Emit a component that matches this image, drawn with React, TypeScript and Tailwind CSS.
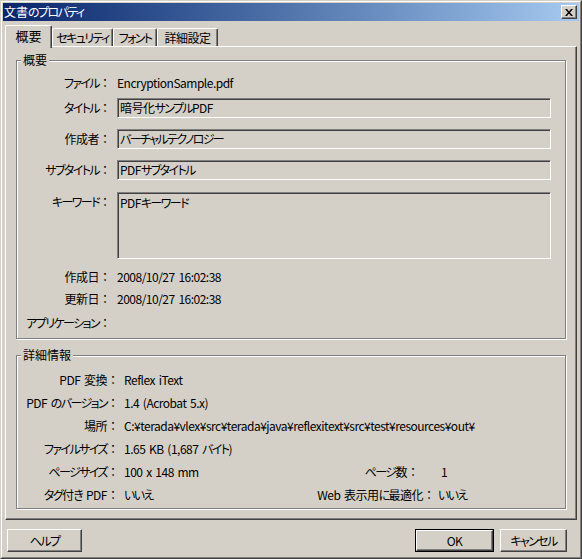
import React from "react";

const palt = "[font-feature-settings:'palt']";

// kana runs come out wider than the reference's UI font, so tighten them
function Jp({ text }: { text: string }) {
  const parts = text.split(/([\u3040-\u30ff]+)/);
  return (
    <>
      {parts.map((p, i) =>
        /[\u3040-\u30ff]/.test(p) ? (
          <span key={i} className={`tracking-[-1.6px] ${palt}`}>
            {p}
          </span>
        ) : (
          p
        ),
      )}
    </>
  );
}

function Label({ text, className }: { text: string; className: string }) {
  return (
    <div className={`${className} shrink-0 whitespace-nowrap text-right`}>
      <Jp text={text} />
      <span className="tracking-normal">：</span>
    </div>
  );
}

function Field({ value, className }: { value: string; className: string }) {
  return (
    <div
      className={`${className} ml-[6px] w-[434px] shrink-0 whitespace-nowrap border border-t-[#808080] border-l-[#808080] border-r-white border-b-white px-[2px] shadow-[inset_1px_1px_0_#404040]`}
    >
      <Jp text={value} />
    </div>
  );
}

function GroupBox({ title, className, children }: { title: string; className: string; children: React.ReactNode }) {
  return (
    <div
      className={`${className} relative border border-[#808080] shadow-[inset_1px_1px_0_#fff,1px_1px_0_#fff]`}
    >
      <span className="absolute left-[4px] top-[-9px] bg-[#d4d0c8] px-[2px] leading-[16px] tracking-normal">{title}</span>
      {children}
    </div>
  );
}

function Button({ label, className, isDefault }: { label: string; className: string; isDefault?: boolean }) {
  return (
    <div className={`${className} h-[23px] shrink-0 ${isDefault ? "border border-black" : ""}`}>
      <div className="flex h-full w-full items-center justify-center border border-t-white border-l-white border-r-[#404040] border-b-[#404040] shadow-[inset_-1px_-1px_0_#808080]">
        <Jp text={label} />
      </div>
    </div>
  );
}

const summary = [
  { label: "作成日", value: "2008/10/27 16:02:38", mt: "mt-[8px]" },
  { label: "更新日", value: "2008/10/27 16:02:38", mt: "mt-[2px]" },
  { label: "アプリケーション", value: "", mt: "mt-[4px]" },
];

const details = [
  { label: "PDF 変換", value: "Reflex iText" },
  { label: "PDF のバージョン", value: "1.4 (Acrobat 5.x)" },
  { label: "場所", value: "C:¥terada¥vlex¥src¥terada¥java¥reflexitext¥src¥test¥resources¥out¥" },
  { label: "ファイルサイズ", value: "1.65 KB (1,687 バイト)" },
];

const tabs = [
  { t: "セキュリティ", w: "w-[61px]" },
  { t: "フォント", w: "w-[44px]" },
  { t: "詳細設定", w: "w-[61px]" },
];

export default function App() {
  return (
    <div className="h-[559px] w-[582px] overflow-hidden border border-t-[#d4d0c8] border-l-[#d4d0c8] border-r-[#404040] border-b-[#404040] bg-[#d4d0c8] font-['Noto_Sans_CJK_JP',sans-serif] text-[12px] leading-[16px] tracking-[-0.5px] [word-spacing:1.5px] text-black">
      <div className="flex h-full flex-col border border-t-white border-l-white border-r-[#808080] border-b-[#808080] p-[1px]">
        {/* title bar */}
        <div className="flex h-[18px] shrink-0 items-center justify-between bg-gradient-to-r from-[#0a246a] to-[#a6caf0] pl-[1px] pr-[2px]">
          <span className="text-[12px] tracking-normal text-white">
            <Jp text="文書のプロパティ" />
          </span>
          <div className="flex h-[14px] w-[16px] items-center justify-center border border-t-white border-l-white border-r-[#404040] border-b-[#404040] bg-[#d4d0c8] shadow-[inset_-1px_-1px_0_#808080]">
            <svg width="8" height="7" viewBox="0 0 8 7">
              <path d="M0 0h2l2 2.5L6 0h2L5 3.5 8 7H6L4 4.5 2 7H0l3-3.5z" fill="#000" />
            </svg>
          </div>
        </div>

        <div className="flex flex-1 flex-col px-[2px] pt-[4px]">
          {/* tabs */}
          <div className="flex h-[21px] items-end">
            <div className="relative z-10 -mb-[2px] flex h-[23px] w-[47px] items-start justify-center rounded-t-[2px] border-l border-t border-r border-l-white border-t-white border-r-[#404040] bg-[#d4d0c8] pt-[2px] shadow-[inset_-1px_0_0_#808080]">
              <span className="text-[13px] tracking-normal">概要</span>
            </div>
            {tabs.map((tab) => (
              <div
                key={tab.t}
                className={`${tab.w} flex h-[18px] items-center justify-center whitespace-nowrap rounded-t-[2px] border-l border-t border-r border-l-white border-t-white border-r-[#404040] shadow-[inset_-1px_0_0_#808080]`}
              >
                <Jp text={tab.t} />
              </div>
            ))}
          </div>

          {/* tab panel */}
          <div className="flex h-[474px] flex-col border border-t-white border-l-white border-r-[#404040] border-b-[#404040] px-[10px] pt-[13px] shadow-[inset_-1px_-1px_0_#808080]">
            <GroupBox title="概要" className="h-[279px] w-[550px]">
              <div className="flex flex-col">
                <div className="mt-[12px] flex h-[20px] items-center">
                  <Label text="ファイル" className="w-[94px]" />
                  <span className="ml-[6px]">EncryptionSample.pdf</span>
                </div>
                <div className="mt-[5px] flex h-[20px] items-center">
                  <Label text="タイトル" className="w-[94px]" />
                  <Field value="暗号化サンプルPDF" className="flex h-[20px] items-center" />
                </div>
                <div className="mt-[11px] flex h-[20px] items-center">
                  <Label text="作成者" className="w-[94px]" />
                  <Field value="バーチャルテクノロジー" className="flex h-[20px] items-center" />
                </div>
                <div className="mt-[11px] flex h-[20px] items-center">
                  <Label text="サブタイトル" className="w-[94px]" />
                  <Field value="PDFサブタイトル" className="flex h-[20px] items-center" />
                </div>
                <div className="mt-[12px] flex items-start">
                  <div className="pt-[2px]">
                    <Label text="キーワード" className="w-[94px]" />
                  </div>
                  <Field value="PDFキーワード" className="h-[67px] pt-[2px]" />
                </div>
                {summary.map((row) => (
                  <div key={row.label} className={`${row.mt} flex h-[20px] items-center`}>
                    <Label text={row.label} className="w-[94px]" />
                    <span className="ml-[6px]">{row.value}</span>
                  </div>
                ))}
              </div>
            </GroupBox>

            <GroupBox title="詳細情報" className="mt-[16px] h-[154px] w-[550px]">
              <div className="flex flex-col pt-[12px]">
                {details.map((row) => (
                  <div key={row.label} className="flex h-[23px] items-center">
                    <Label text={row.label} className="w-[102px]" />
                    <span className="ml-[5px] whitespace-nowrap">
                      <Jp text={row.value} />
                    </span>
                  </div>
                ))}
                <div className="flex h-[23px] items-center">
                  <Label text="ページサイズ" className="w-[102px]" />
                  <span className="ml-[5px] w-[178px]">100 x 148 mm</span>
                  <Label text="ページ数" className="w-[117px]" />
                  <span className="ml-[22px]">1</span>
                </div>
                <div className="flex h-[23px] items-center">
                  <Label text="タグ付き PDF" className="w-[102px]" />
                  <span className="ml-[5px] w-[100px]">
                    <Jp text="いいえ" />
                  </span>
                  <Label text="Web 表示用に最適化" className="w-[211px]" />
                  <span className="ml-[3px]">
                    <Jp text="いいえ" />
                  </span>
                </div>
              </div>
            </GroupBox>
          </div>

          {/* buttons */}
          <div className="mt-[9px] flex items-center">
            <Button label="ヘルプ" className="ml-[2px] w-[75px]" />
            <Button label="OK" className="ml-auto w-[79px]" isDefault />
            <Button label="キャンセル" className="ml-[6px] mr-[10px] w-[67px]" />
          </div>
        </div>
      </div>
    </div>
  );
}
